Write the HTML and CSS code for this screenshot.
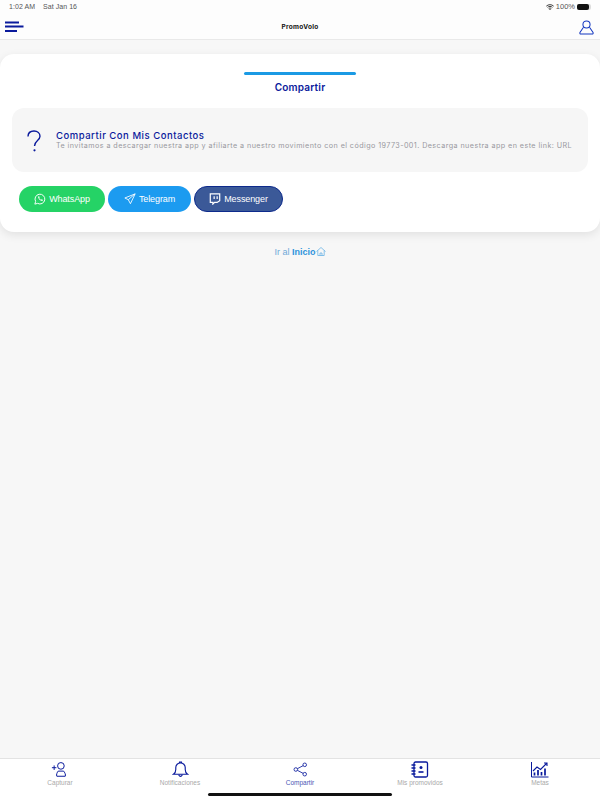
FILE: index.html
```html
<!DOCTYPE html>
<html lang="es">
<head>
<meta charset="utf-8">
<title>PromoVolo</title>
<link rel="stylesheet" href="styles.css">
</head>
<body>
<div class="app">
  <header class="top">
    <div class="status">
      <span class="status-left"><span>1:02 AM</span><span>Sat Jan 16</span></span>
      <span class="status-right">
        <svg class="wifi" viewBox="0 0 12 9" width="8" height="6" fill="none" stroke="#222" stroke-width="1.300"><path d="M0.500 3.200C3.500 0.300 8.500 0.300 11.500 3.200M2.300 5C4.300 3.200 7.700 3.200 9.700 5M4 6.800C5.200 5.800 6.800 5.800 8 6.800"/><circle cx="6" cy="8" r="1" fill="#222" stroke="none"/></svg>
        <span>100%</span>
        <span class="battery"><span class="battery-fill"></span></span>
      </span>
    </div>
    <div class="navbar">
      <svg class="menu" viewBox="0 0 19 12" width="19" height="12"><path d="M0 1.500H14M0 5.500H18.500M0 10H12" stroke="#0a1a9c" stroke-width="1.800" fill="none"/></svg>
      <span class="brand">PromoVolo</span>
      <svg class="user" viewBox="0 0 16 16" width="15" height="15" fill="none" stroke="#1538c0" stroke-width="1.100"><circle cx="8" cy="4.800" r="3.800"/><path d="M4.800 7.800 L1 13.200 Q0.600 15 2 15 H14 Q15.400 15 15 13.200 L11.200 7.800"/></svg>
    </div>
  </header>

  <main class="content">
    <section class="card">
      <div class="tab">
        <div class="tab-line"></div>
        <div class="tab-label">Compartir</div>
      </div>
      <div class="message">
        <svg class="question" viewBox="0 0 14 22" width="14" height="22" fill="none" stroke="#0a1a9c" stroke-width="1.400"><path d="M1 6.500C1 3 3.500 1 7 1C10.500 1 13 3.200 13 6.300C13 10.500 7.500 10.500 7.500 16"/><circle cx="7.500" cy="20.300" r="1.100" fill="#0a1a9c" stroke="none"/></svg>
        <div class="message-text">
          <div class="message-title">Compartir Con Mis Contactos</div>
          <div class="message-body">Te invitamos a descargar nuestra app y afiliarte a nuestro movimiento con el código 19773-001. Descarga nuestra app en este link: URL</div>
        </div>
      </div>
      <div class="buttons">
        <span class="btn btn-whatsapp">
          <svg viewBox="0 0 14 14" width="12" height="12" fill="none" stroke="#fff" stroke-width="1.100"><path d="M1 13 L1.900 9.800 A5.700 5.700 0 1 1 4.200 12.100Z"/><path d="M4.800 4 C4.500 6.500 7.500 9.500 10 9.200 L10.200 8 L8.800 7.400 L8.200 8 C7.300 7.600 6.400 6.700 6 5.800 L6.600 5.200 L6 3.800Z" fill="#fff" stroke="none"/></svg>
          WhatsApp
        </span>
        <span class="btn btn-telegram">
          <svg viewBox="0 0 14 14" width="12" height="12" fill="none" stroke="#fff" stroke-width="1"><path d="M13 1 L1 5.800 L5 7.800 L7.500 12.500Z M13 1 L5 7.800"/></svg>
          Telegram
        </span>
        <span class="btn btn-messenger">
          <svg viewBox="0 0 14 14" width="12" height="12" fill="none" stroke="#fff" stroke-width="1.400"><path d="M1.500 1 H12.500 V9 L9.500 11 H6.500 L4.500 13 V11 H1.500Z"/><path d="M6 3.800V7M9.500 3.800V7"/></svg>
          Messenger
        </span>
      </div>
    </section>
    <div class="home-link">
      <span>Ir al</span> <strong>Inicio</strong><svg viewBox="0 0 10 9" width="10" height="9" fill="none" stroke="#3f9fe0" stroke-width="0.600"><path d="M0.500 4.500 L5 0.500 L9.500 4.500M1.800 3.500V8.500H8.200V3.500M4 8.500V6H6V8.500"/></svg>
    </div>
  </main>

  <nav class="tabbar">
    <div class="tabitem">
      <svg viewBox="0 0 20 17" width="18" height="16" fill="none" stroke="#0a1a9c" stroke-width="1.100"><circle cx="11" cy="4.500" r="3.700"/><path d="M6.500 16 C5.500 14.500 7 11.300 8 10.300 H14 C15 11.300 16.800 14.500 15.800 16Z"/><path d="M1 6.500H6M3.500 4V9"/></svg>
      <span>Capturar</span>
    </div>
    <div class="tabitem">
      <svg viewBox="0 0 18 18" width="17" height="17" fill="none" stroke="#0a1a9c" stroke-width="1.200"><path d="M1.500 14 Q4 12.500 4 9 V7 A5 5 0 0 1 14 7 V9 Q14 12.500 16.500 14Z"/><path d="M8 2V1H10V2M7 14.500 Q9 18 11 14.500"/></svg>
      <span>Notificaciones</span>
    </div>
    <div class="tabitem tabitem-active">
      <svg viewBox="0 0 16 16" width="15" height="16" fill="none" stroke="#0a1a9c" stroke-width="0.900"><circle cx="12.500" cy="3" r="1.900"/><circle cx="3" cy="8" r="1.900"/><circle cx="12.500" cy="13" r="1.900"/><path d="M4.700 7.100L10.800 3.900M4.700 8.900L10.800 12.100"/></svg>
      <span>Compartir</span>
    </div>
    <div class="tabitem">
      <svg viewBox="0 0 18 17" width="18" height="16" fill="none" stroke="#0a1a9c" stroke-width="1.300"><rect x="3" y="1" width="13.500" height="15" rx="1.500"/><path d="M0.500 4H4.500M0.500 7H4.500M0.500 10H4.500M0.500 13H4.500"/><circle cx="10" cy="6.500" r="1.500" fill="#0a1a9c" stroke="none"/><path d="M7.500 11H12.500" stroke-width="1.600"/></svg>
      <span>Mis promovidos</span>
    </div>
    <div class="tabitem">
      <svg viewBox="0 0 18 16" width="18" height="16" fill="none" stroke="#0a1a9c" stroke-width="1"><path d="M0.500 0.500V15.500H17.500"/><path d="M2 9.500L6 5.500L9.500 8L15.500 2M13 1.500H16V4.500" stroke-width="1.100"/><path d="M3.500 14V11M7 14V8.500M10.500 14V10.500M14 14V7" stroke-width="1.700"/></svg>
      <span>Metas</span>
    </div>
    <div class="home-indicator"></div>
  </nav>
</div>
</body>
</html>
```
FILE: styles.css
```css
* { box-sizing: border-box; }
html, body { margin: 0; padding: 0; }
body { font-family: "Liberation Sans", Arial, sans-serif; background: #f7f7f7; }
.app { width: 600px; height: 800px; display: flex; flex-direction: column; background: #f7f7f7; }

.top { height: 40px; background: #fdfdfd; border-bottom: 1px solid #e9e9e9; flex: none; }
.status { height: 13px; display: flex; justify-content: space-between; align-items: center; padding: 0 9px; font-size: 7px; color: #555; }
.status-left { display: flex; gap: 8px; letter-spacing: 0.050px; }
.status-right { display: flex; align-items: center; gap: 2px; font-size: 7.500px; }
.battery { width: 14px; height: 6px; border-radius: 2px; background: #ddd; display: block; padding: 0 1px 0 0; }
.battery-fill { display: block; width: 12px; height: 6px; border-radius: 2px; background: #111; }
.navbar { height: 26px; display: flex; justify-content: space-between; align-items: center; padding: 0 6px 0 5px; }
.menu { margin-top: 2px; }
.user { margin-top: 2px; }
.brand { font-family: Inter, sans-serif; font-size: 6.500px; font-weight: 700; color: #111; letter-spacing: 0.300px; margin: 2px 3px 0 0; }

.content { flex: 1; padding-top: 14px; }
.card { height: 178px; background: #fff; border-radius: 14px; box-shadow: 0 3px 10px rgba(0,0,0,.09); padding: 18px 12px 0; }
.tab { width: 112px; margin: 0 auto; text-align: center; }
.tab-line { height: 3px; background: #1b9ae4; border-radius: 2px; }
.tab-label { margin-top: 6px; font-family: Inter, sans-serif; font-size: 10px; font-weight: 600; line-height: 13px; color: #0a1a9c; letter-spacing: 0.200px; }
.message { height: 64px; margin-top: 14px; background: #f6f6f6; border-radius: 12px; display: flex; align-items: center; padding: 0 16px 0 15px; }
.question { flex: none; margin: 1px 15px 0 0; }
.message-text { min-width: 0; margin-top: 1px; }
.message-title { font-family: Inter, sans-serif; font-size: 9.500px; font-weight: 500; line-height: 11px; color: #0a1a9c; letter-spacing: 0.520px; }
.message-body { font-family: Inter, sans-serif; font-size: 7.200px; font-weight: 400; line-height: 10px; color: #98989e; letter-spacing: 0.430px; white-space: nowrap; }
.buttons { display: flex; gap: 3px; margin: 14px 0 0 7px; }
.btn { height: 26px; border-radius: 13px; display: flex; align-items: center; justify-content: center; gap: 3px; color: #fff; font-size: 9px; letter-spacing: -0.100px; }
.btn-whatsapp { width: 86px; background: #25d366; }
.btn-telegram { width: 83px; background: #1c9bf0; }
.btn-messenger { width: 89px; background: #3b5998; border: 1px solid #0d2a8c; }

.home-link { margin-top: 14px; text-align: center; font-size: 9px; line-height: 12px; color: #6fa9d8; }
.home-link strong { color: #2f93dc; font-weight: 700; }
.home-link svg { vertical-align: -0.500px; }

.tabbar { position: relative; height: 42px; flex: none; background: #fff; border-top: 1px solid #e3e3e3; display: flex; padding: 2px 0 0; }
.tabitem { width: 120px; display: flex; flex-direction: column; align-items: center; gap: 1px; font-size: 6.500px; line-height: 8px; color: #a9a9a9; }
.tabitem svg { display: block; height: 17px; }
.tabitem-active { color: #4957b5; }
.home-indicator { position: absolute; left: 208px; bottom: 4px; width: 184px; height: 3px; border-radius: 2px; background: #111; }
```
